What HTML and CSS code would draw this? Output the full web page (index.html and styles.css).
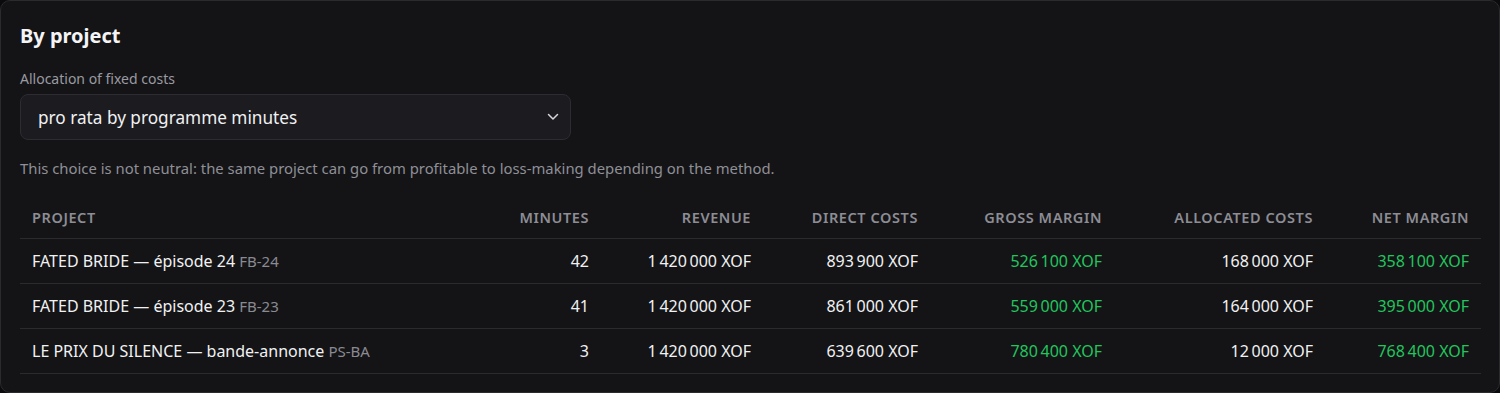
FILE: index.html
```html
<!DOCTYPE html>
<html lang="en">
<head>
<meta charset="utf-8">
<title>By project</title>
<link rel="stylesheet" href="styles.css">
</head>
<body>
<section class="card">
  <h2 class="title">By project</h2>
  <label class="field-label" for="alloc">Allocation of fixed costs</label>
  <div class="select">
    <span class="select-value" id="alloc">pro rata by programme minutes</span>
    <svg class="chevron" width="12" height="8" viewBox="0 0 12 8"><path d="M1.5 1.5 L6 6 L10.5 1.5" fill="none" stroke="#d8d8dc" stroke-width="1.5" stroke-linecap="round" stroke-linejoin="round"/></svg>
  </div>
  <p class="hint">This choice is not neutral: the same project can go from profitable to loss-making depending on the method.</p>
  <table class="table">
    <colgroup>
      <col class="c-project">
      <col class="c-minutes">
      <col class="c-revenue">
      <col class="c-direct">
      <col class="c-gross">
      <col class="c-alloc">
      <col class="c-net">
    </colgroup>
    <thead>
      <tr>
        <th class="left">Project</th>
        <th>Minutes</th>
        <th>Revenue</th>
        <th>Direct costs</th>
        <th>Gross margin</th>
        <th>Allocated costs</th>
        <th>Net margin</th>
      </tr>
    </thead>
    <tbody>
      <tr>
        <td class="left">FATED BRIDE — épisode 24 <span class="code">FB-24</span></td>
        <td>42</td>
        <td>1&#8239;420&#8239;000 XOF</td>
        <td>893&#8239;900 XOF</td>
        <td class="pos">526&#8239;100 XOF</td>
        <td>168&#8239;000 XOF</td>
        <td class="pos">358&#8239;100 XOF</td>
      </tr>
      <tr>
        <td class="left">FATED BRIDE — épisode 23 <span class="code">FB-23</span></td>
        <td>41</td>
        <td>1&#8239;420&#8239;000 XOF</td>
        <td>861&#8239;000 XOF</td>
        <td class="pos">559&#8239;000 XOF</td>
        <td>164&#8239;000 XOF</td>
        <td class="pos">395&#8239;000 XOF</td>
      </tr>
      <tr>
        <td class="left">LE PRIX DU SILENCE — bande-annonce <span class="code">PS-BA</span></td>
        <td>3</td>
        <td>1&#8239;420&#8239;000 XOF</td>
        <td>639&#8239;600 XOF</td>
        <td class="pos">780&#8239;400 XOF</td>
        <td>12&#8239;000 XOF</td>
        <td class="pos">768&#8239;400 XOF</td>
      </tr>
    </tbody>
  </table>
</section>
</body>
</html>
```
FILE: styles.css
```css
* { box-sizing: border-box; }
html, body { margin: 0; padding: 0; background: #0b0b0d; }
body {
  font-family: "Noto Sans", "Open Sans", sans-serif;
  color: #f1f1f3;
  width: 1500px;
  height: 393px;
  overflow: hidden;
}
.card {
  height: 393px;
  background: #141416;
  border: 1px solid #2a2a2f;
  border-radius: 10px;
  padding: 19px 19px 18px 19px;
}
.title {
  margin: 0;
  font-size: 20px;
  font-weight: 700;
  line-height: 32px;
  color: #f4f4f6;
}
.field-label {
  display: block;
  margin-top: 17px;
  font-size: 14px;
  line-height: 20px;
  color: #9a9aa2;
}
.select {
  margin-top: 5px;
  width: 551px;
  height: 46px;
  background: #1c1c20;
  border: 1px solid #2c2c32;
  border-radius: 8px;
  display: flex;
  align-items: center;
  justify-content: space-between;
  padding: 0 11px 0 17px;
}
.select-value {
  font-size: 17.2px;
  color: #f1f1f3;
}
.chevron { display: block; }
.hint {
  margin: 18px 0 0;
  font-size: 14.85px;
  line-height: 20px;
  color: #8f8f97;
}
.table {
  margin-top: 18px;
  width: 1461px;
  border-collapse: collapse;
  table-layout: fixed;
}
.c-minutes { width: 118px; }
.c-revenue { width: 162px; }
.c-direct { width: 167px; }
.c-gross { width: 184px; }
.c-alloc { width: 211px; }
.c-net { width: 156px; }
th, td {
  padding: 0 12px;
  text-align: right;
  white-space: nowrap;
}
th {
  height: 42px;
  font-size: 14.5px;
  font-weight: 600;
  letter-spacing: 0.04em;
  text-transform: uppercase;
  color: #8d8d95;
  border-bottom: 1px solid #2a2a2f;
  vertical-align: middle;
}
td {
  height: 45px;
  font-size: 16px;
  color: #f1f1f3;
  border-bottom: 1px solid #2a2a2f;
}
.left { text-align: left; }
.code {
  font-size: 15px;
  color: #8a8a92;
}
.pos { color: #22c55e; }
```
